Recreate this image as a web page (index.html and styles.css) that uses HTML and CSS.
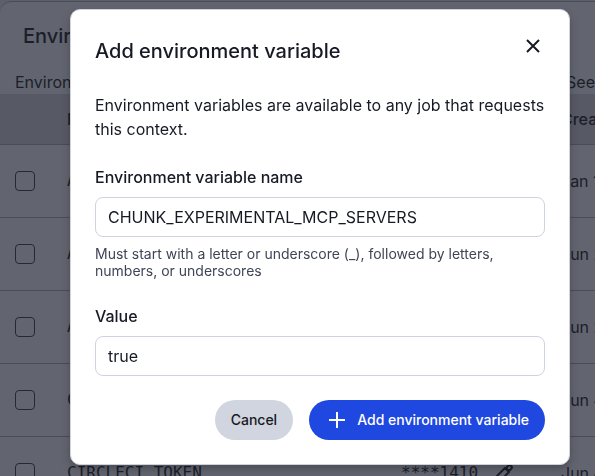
FILE: index.html
```html
<!DOCTYPE html>
<html lang="en">
<head>
    <meta charset="UTF-8">
    <meta name="viewport" content="width=device-width, initial-scale=1.0">
    <title>Environment Variables</title>
    <link rel="stylesheet" href="styles.css">
</head>
<body>
    <main class="panel">
        <h1 class="panel-title">Environment Variables</h1>
        <div class="panel-intro">
            <span>Environment variables</span>
            <span class="intro-more">See</span>
        </div>
        <table class="vars">
            <thead>
                <tr><th class="col-check"></th><th class="col-name">Name</th><th class="col-value">Value</th><th class="col-date">Created</th></tr>
            </thead>
            <tbody>
                <tr><td><input type="checkbox" aria-label="Select row 1"></td><td class="mono">A</td><td></td><td>Jan 1</td></tr>
                <tr><td><input type="checkbox" aria-label="Select row 2"></td><td class="mono">A</td><td></td><td>Jun 2</td></tr>
                <tr><td><input type="checkbox" aria-label="Select row 3"></td><td class="mono">A</td><td></td><td>Jun 2</td></tr>
                <tr><td><input type="checkbox" aria-label="Select row 4"></td><td class="mono">C</td><td></td><td>Jun 4</td></tr>
                <tr>
                    <td><input type="checkbox" aria-label="Select row 5"></td>
                    <td class="mono">CIRCLECI_TOKEN</td>
                    <td class="mono">
                        <div class="value">
                            ****1410
                            <button class="edit" aria-label="Edit">
                                <svg width="20" height="20" viewBox="0 0 20 20" fill="none" stroke="currentColor" stroke-width="2" stroke-linejoin="round">
                                    <path d="M2 18l1-5L11 5l4 4L7 17z"/>
                                    <path d="M12 5l2-2q2-2 3 0q2 1 0 3l-2 2z"/>
                                </svg>
                            </button>
                        </div>
                    </td>
                    <td>Jun 4</td>
                </tr>
            </tbody>
        </table>
    </main>

    <div class="overlay">
        <form class="modal" role="dialog" aria-labelledby="modal-title">
            <div class="modal-header">
                <h2 id="modal-title">Add environment variable</h2>
                <button type="button" class="close" aria-label="Close">
                    <svg width="24" height="24" viewBox="0 0 24 24" fill="none" stroke="currentColor" stroke-width="2">
                        <path d="M6 6l12 12M18 6L6 18"/>
                    </svg>
                </button>
            </div>
            <p class="description">Environment variables are available to any job that requests this context.</p>
            <div class="field">
                <label for="name">Environment variable name</label>
                <input type="text" id="name" value="CHUNK_EXPERIMENTAL_MCP_SERVERS" aria-describedby="name-hint">
                <p class="hint" id="name-hint">Must start with a letter or underscore (_), followed by letters, numbers, or underscores</p>
            </div>
            <div class="field">
                <label for="value">Value</label>
                <input type="text" id="value" value="true">
            </div>
            <div class="actions">
                <button type="button" class="btn">Cancel</button>
                <button type="submit" class="btn primary">
                    <svg width="24" height="24" viewBox="0 0 24 24" fill="none" stroke="currentColor" stroke-width="2">
                        <path d="M12 4v16M4 12h16"/>
                    </svg>
                    Add environment variable
                </button>
            </div>
        </form>
    </div>
</body>
</html>
```

FILE: styles.css
```css
* {
    box-sizing: border-box;
}
body {
    display: flex;
    flex-direction: column;
    margin: 0;
    padding-top: 1px;
    height: 100vh;
    overflow: hidden;
    background-color: #f0f0f3;
    color: #343434;
    font-family: Inter, sans-serif;
    font-size: 16px;
    line-height: 24px;
}
h1, h2, p {
    margin: 0;
}
button, input {
    font: inherit;
    color: inherit;
}
.panel {
    flex: 1;
    min-height: 0;
    overflow: hidden;
    padding-top: 20px;
    background-color: #fff;
    border-top: 1px solid #b5b5b5;
    border-radius: 12px 0 0 0;
}
.panel-title {
    padding: 0 23px;
    font-size: 20px;
    font-weight: 500;
    line-height: 28px;
}
.panel-intro {
    display: flex;
    justify-content: space-between;
    padding: 20px 0 0 15px;
}
.vars {
    width: 100%;
    table-layout: fixed;
    border-collapse: collapse;
    white-space: nowrap;
}
.vars th {
    height: 50px;
    padding: 0;
    background-color: #dfdde1;
    font-weight: 500;
    text-align: left;
}
.vars td {
    height: 73px;
    padding: 0;
}
.vars tr {
    border-bottom: 1px solid #b8b8b8;
}
.vars td:first-child {
    padding-left: 15px;
}
.col-check {
    width: 67px;
}
.col-date {
    width: 34px;
}
.col-value {
    width: 160px;
}
.vars .mono {
    font-family: "DejaVu Sans Mono", monospace;
}
.vars input {
    display: block;
    appearance: none;
    width: 20px;
    height: 20px;
    margin: 0;
    border: 1px solid #505050;
    border-radius: 4px;
}
.value {
    display: flex;
    align-items: center;
    gap: 16px;
}
.edit, .close {
    display: flex;
    padding: 0;
    border: none;
    background: none;
    cursor: pointer;
}
.overlay {
    position: fixed;
    inset: 0;
    padding: 9px 25px 11px 70px;
    background-color: rgba(17, 22, 37, 0.66);
}
.modal {
    padding: 24px;
    border: 1px solid #d0d3de;
    border-radius: 10px;
    background-color: #fff;
    color: #161a24;
    box-shadow: 0 4px 10px rgba(0, 0, 0, 0.25);
}
.modal-header {
    display: flex;
    justify-content: space-between;
    margin-bottom: 25px;
}
.modal h2 {
    font-size: 20px;
    font-weight: 500;
    line-height: 34px;
}
.close {
    align-self: flex-start;
}
.description {
    margin-bottom: 24px;
}
.field {
    margin-bottom: 24px;
}
.field label {
    display: block;
    margin-bottom: 8px;
    font-weight: 500;
}
.field input {
    display: block;
    width: 100%;
    height: 40px;
    padding: 0 12px;
    border: 1px solid #cfd3df;
    border-radius: 8px;
    background-color: #fff;
}
.hint {
    padding: 8px 0 1px;
    color: #3f4556;
    font-size: 14px;
    line-height: 17px;
}
.actions {
    display: flex;
    justify-content: flex-end;
    gap: 16px;
}
.btn {
    display: flex;
    align-items: center;
    gap: 8px;
    height: 40px;
    padding: 0 16px;
    border: none;
    border-radius: 20px;
    background-color: #d0d5df;
    font-size: 14px;
    font-weight: 500;
    cursor: pointer;
}
.primary {
    background-color: #1f48e0;
    color: #fff;
}
```
